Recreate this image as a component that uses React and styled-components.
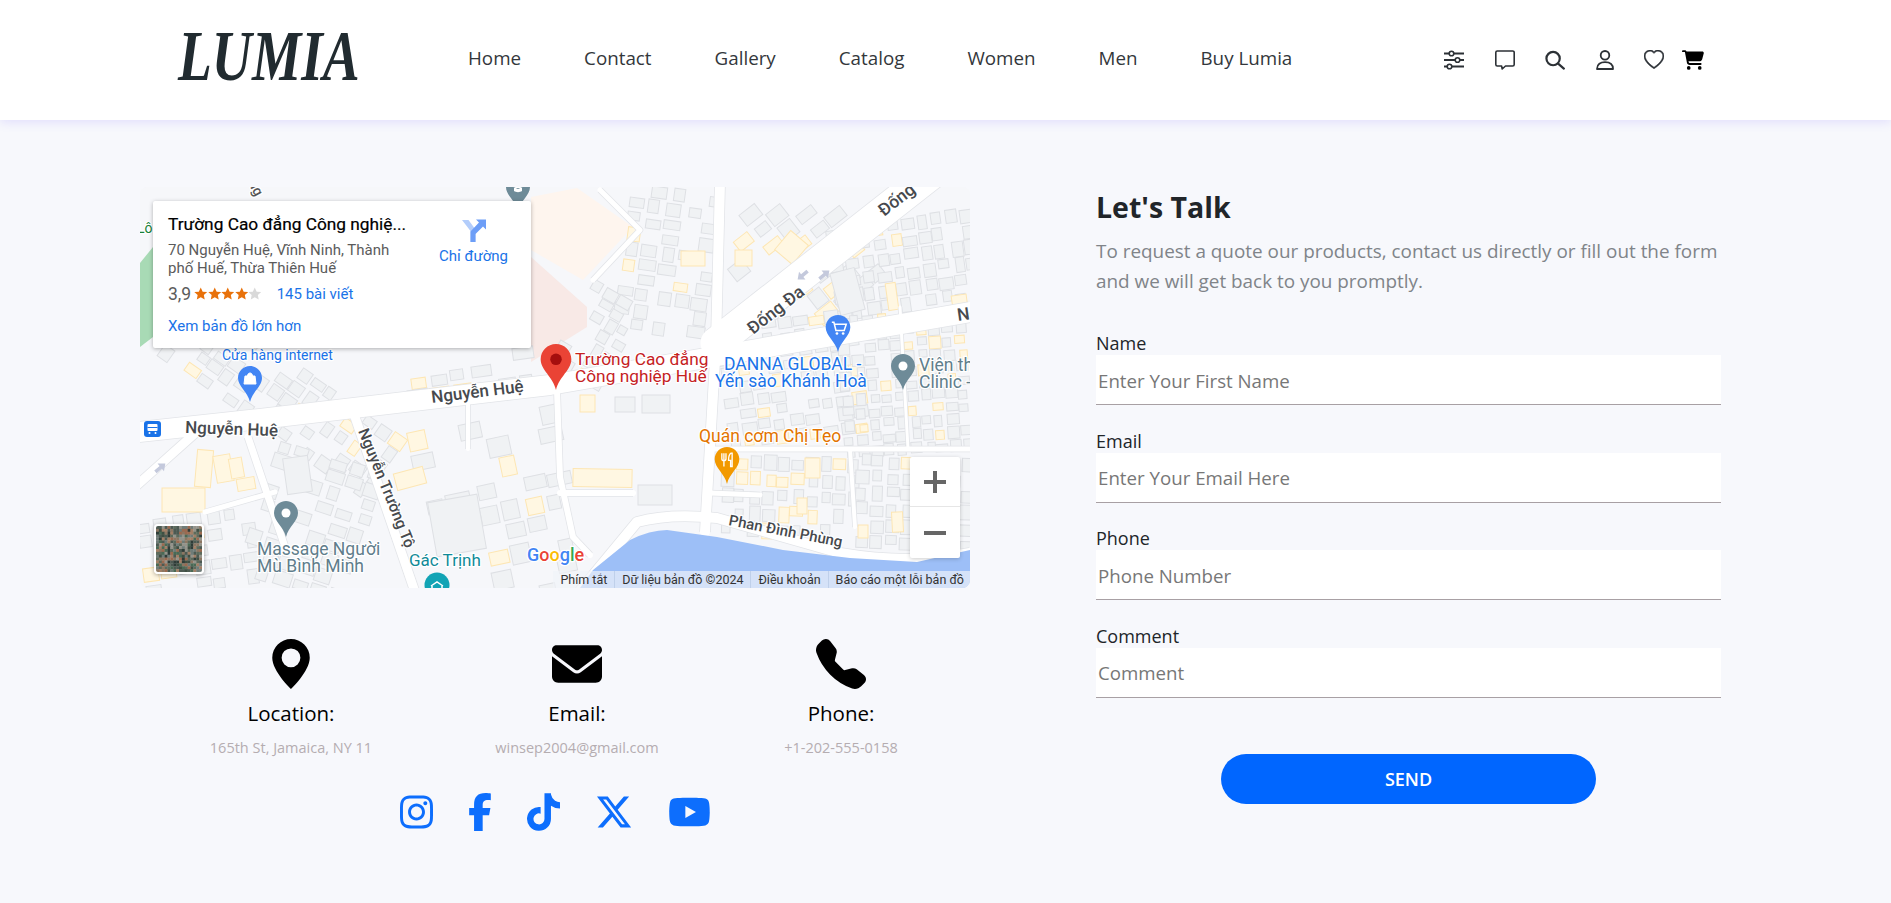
import React from "react";
import styled, { createGlobalStyle } from "styled-components";
import { BsGeoAltFill, BsHeart, BsTelephoneFill } from "react-icons/bs";
import { FaCartShopping, FaEnvelope, FaFacebookF, FaInstagram, FaTiktok, FaXTwitter, FaYoutube } from "react-icons/fa6";

const UI_FONT = `"Open Sans", "Noto Sans", sans-serif`;

const Global = createGlobalStyle`
  html, body { margin: 0; padding: 0; background: #f7f8fc; }
  * { box-sizing: border-box; }
  body { font-family: ${UI_FONT}; }
`;

const Page = styled.div`
  min-height: 903px;
  height: 903px;
  overflow: hidden;
  background: #f7f8fc;
`;

const Header = styled.header`
  height: 120px;
  background: #fff;
  display: flex;
  align-items: center;
  padding: 0 187px 0 178px;
  box-shadow: 0 2px 10px rgba(110, 90, 255, 0.16);
  position: relative;
`;

const Logo = styled.div`
  width: 290px;
  height: 62px;
  margin-top: -8px;
  font: italic 700 72px/62px "Liberation Serif", serif;
  color: #212b30;
  transform: scaleX(0.77);
  transform-origin: left center;
  white-space: nowrap;
`;

const Nav = styled.nav`
  display: flex;
  gap: 63px;
  margin-top: -5px;
`;

const NavLink = styled.a`
  font-size: 18.800px;
  font-weight: 400;
  color: #33373b;
  white-space: nowrap;
`;

const HeaderIcons = styled.div`
  margin-left: auto;
  display: flex;
  align-items: center;
  gap: 30px;
  color: #2c3136;
`;

const HeaderIcon = styled.span`
  display: flex;
  width: 20px;
  height: 20px;
  align-items: center;
  justify-content: center;
  margin-left: ${(p) => p.$nudge || 0}px;
`;

const CartIcon = styled(HeaderIcon)`
  width: 22px;
  margin-left: -12px;
  color: #000;
`;

const Main = styled.main`
  display: flex;
  gap: 126px;
  padding: 67px 170px 0 140px;
`;

const LeftColumn = styled.section`
  width: 830px;
  flex: none;
`;

const MapFrame = styled.div`
  position: relative;
  width: 830px;
  height: 401px;
  border-radius: 8px;
  overflow: hidden;
  background: #f5f6f9;
  font-family: Roboto, sans-serif;
`;

const MapSvg = styled.svg`
  display: block;
`;

const MapLabel = styled.text`
  font-family: Roboto, sans-serif;
  font-size: ${(p) => p.$size || 17.5}px;
  font-weight: ${(p) => p.$weight || 400};
  fill: ${(p) => p.$color || "#5f6368"};
  stroke: #fff;
  stroke-width: 2.5px;
  stroke-linejoin: round;
  paint-order: stroke;
`;

const InfoCard = styled.div`
  position: absolute;
  left: 13px;
  top: 14px;
  width: 378px;
  height: 147px;
  background: #fff;
  border-radius: 2px;
  box-shadow: 0 1px 4px rgba(0, 0, 0, 0.3);
  display: flex;
  justify-content: space-between;
  padding: 13px 23px 0 15px;
`;

const CardInfo = styled.div`
  width: 262px;
`;

const CardTitle = styled.div`
  font-size: 17.300px;
  font-weight: 400;
  line-height: 20px;
  color: #000;
  white-space: nowrap;
  -webkit-text-stroke: 0.2px #000;
`;

const CardAddress = styled.div`
  font-size: 15px;
  line-height: 18px;
  color: #5b5b5b;
  margin-top: 7px;
  width: 240px;
`;

const RatingRow = styled.div`
  display: flex;
  align-items: center;
  margin-top: 7px;
  height: 20px;
`;

const RatingValue = styled.span`
  font-size: 17.500px;
  color: #5b5b5b;
  margin-right: 3px;
`;

const Star = styled.svg`
  display: block;
  width: 13.500px;
  height: 13.500px;
  fill: ${(p) => (p.$on ? "#e8710a" : "#d9d9d9")};
`;

const CardLink = styled.a`
  font-size: 15px;
  color: #1a73e8;
  white-space: nowrap;
`;

const ReviewLink = styled(CardLink)`
  margin-left: 15px;
`;

const LargerMapLink = styled(CardLink)`
  display: block;
  margin-top: 13px;
`;

const Directions = styled.div`
  display: flex;
  flex-direction: column;
  align-items: center;
  gap: 5px;
  padding-top: 4px;
`;

const Thumbnail = styled.div`
  position: absolute;
  left: 14px;
  bottom: 14px;
  width: 50px;
  height: 50px;
  border: 2px solid #fff;
  border-radius: 4px;
  overflow: hidden;
  box-shadow: 0 1px 4px rgba(0, 0, 0, 0.35);
`;

const ZoomControl = styled.div`
  position: absolute;
  left: 770px;
  top: 270px;
  width: 50px;
  height: 101px;
  background: #fff;
  border-radius: 2px;
  box-shadow: 0 1px 4px rgba(0, 0, 0, 0.2);
`;

const ZoomGlyph = styled.div`
  height: ${(p) => (p.$divided ? "50px" : "52px")};
  display: flex;
  align-items: center;
  justify-content: center;
  border-bottom: ${(p) => (p.$divided ? "1px solid #e6e6e6" : "0")};
`;

const Attribution = styled.div`
  position: absolute;
  right: 0;
  bottom: 0;
  height: 17px;
  display: flex;
  align-items: center;
  background: rgba(240, 243, 248, 0.68);
  font-size: 12.500px;
  color: #333;
`;

const AttributionItem = styled.span`
  padding: 0 7px;
  line-height: 17px;
  white-space: nowrap;
  & + & {
    border-left: 1px solid #bfd0ea;
  }
  &:last-child {
    padding-right: 6px;
  }
`;

const ContactGrid = styled.div`
  display: grid;
  grid-template-columns: 302px 270px 258px;
  margin-top: 51px;
`;

const ContactItem = styled.div`
  display: flex;
  flex-direction: column;
  align-items: center;
  color: #000;
`;

const ContactTitle = styled.div`
  font-size: 20.500px;
  font-weight: 500;
  line-height: 26px;
  margin-top: 11px;
`;

const ContactValue = styled.div`
  font-size: 14.500px;
  color: #b5adb1;
  line-height: 18px;
  margin-top: 13px;
`;

const Socials = styled.div`
  display: flex;
  justify-content: center;
  align-items: center;
  gap: 35px;
  margin-top: 36px;
  color: #0d6efd;
`;

const Social = styled.a`
  display: block;
  height: 38px;
  width: ${(p) => p.$width}px;
  color: inherit;
  svg {
    display: block;
    width: 100%;
    height: 100%;
  }
`;

const FormColumn = styled.section`
  width: 625px;
  flex: none;
`;

const Heading = styled.h1`
  margin: 0;
  font-size: 28.500px;
  font-weight: 700;
  line-height: 40px;
  color: #212529;
`;

const Intro = styled.p`
  margin: 9px 0 0;
  font-size: 18.900px;
  line-height: 30px;
  color: #808489;
  width: 630px;
`;

const Form = styled.form`
  display: flex;
  flex-direction: column;
  margin-top: 36px;
`;

const Field = styled.div`
  display: flex;
  flex-direction: column;
  height: 97.670px;
`;

const FieldLabel = styled.label`
  font-size: 18px;
  font-weight: 500;
  line-height: 24px;
  color: #212529;
  height: 24px;
  margin-top: -1px;
`;

const Input = styled.input`
  width: 100%;
  height: 50px;
  flex: none;
  border: 0;
  border-bottom: 1px solid #a8a0a4;
  background: #fff;
  padding: 1px 2px 0;
  font: 400 18.700px ${UI_FONT};
  outline: none;
  &::placeholder {
    color: #777;
    opacity: 1;
  }
`;

const SendButton = styled.button`
  display: block;
  align-self: center;
  width: 375px;
  height: 50px;
  margin-top: 31px;
  border: 0;
  border-radius: 25px;
  background: #0066ff;
  color: #fff;
  font: 600 18px ${UI_FONT};
`;

/* ---------- map drawing ---------- */

function makeRandom(seed) {
  let a = seed;
  return () => {
    a = (a + 0x6d2b79f5) | 0;
    let t = Math.imul(a ^ (a >>> 15), 1 | a);
    t = (t + Math.imul(t ^ (t >>> 7), 61 | t)) ^ t;
    return ((t ^ (t >>> 14)) >>> 0) / 4294967296;
  };
}

const BLOCKS = [
  { x: 480, y: 0, w: 95, h: 150, rot: 8, sx: 19, sy: 15, p: 0.72, yl: 0.25 },
  { x: 430, y: 100, w: 60, h: 85, rot: 30, sx: 15, sy: 14, p: 0.75, yl: 0.15 },
  { x: 590, y: 0, w: 130, h: 140, rot: -38, sx: 22, sy: 18, p: 0.62, yl: 0.3 },
  { x: 690, y: 30, w: 140, h: 90, rot: -8, sx: 15, sy: 16, p: 0.92, yl: 0.08 },
  { x: 0, y: 165, w: 260, h: 75, rot: 35, sx: 16, sy: 15, p: 0.62, yl: 0.12 },
  { x: 265, y: 165, w: 130, h: 45, rot: -8, sx: 22, sy: 15, p: 0.5, yl: 0.3 },
  { x: 0, y: 325, w: 110, h: 77, rot: -8, sx: 17, sy: 16, p: 0.7, yl: 0.2 },
  { x: 115, y: 262, w: 110, h: 140, rot: 18, sx: 19, sy: 16, p: 0.7, yl: 0.08 },
  { x: 270, y: 230, w: 150, h: 75, rot: -12, sx: 26, sy: 22, p: 0.4, yl: 0.1 },
  { x: 345, y: 310, w: 75, h: 90, rot: -12, sx: 22, sy: 22, p: 0.5, yl: 0.1 },
  { x: 580, y: 130, w: 130, h: 125, rot: -8, sx: 16, sy: 14, p: 0.85, yl: 0.16 },
  { x: 700, y: 125, w: 130, h: 140, rot: -4, sx: 13, sy: 13, p: 0.92, yl: 0.1 },
  { x: 580, y: 268, w: 130, h: 75, rot: 2, sx: 14, sy: 17, p: 0.85, yl: 0.2 },
  { x: 715, y: 268, w: 115, h: 85, rot: 2, sx: 15, sy: 16, p: 0.88, yl: 0.1 },
];

const BUILDINGS = (() => {
  const rnd = makeRandom(41);
  return BLOCKS.map((b) => {
    const rects = [];
    for (let y = b.y; y < b.y + b.h; y += b.sy) {
      for (let x = b.x; x < b.x + b.w; x += b.sx) {
        if (rnd() > b.p) continue;
        const w = b.sx * (0.55 + rnd() * 0.4);
        const h = b.sy * (0.55 + rnd() * 0.4);
        rects.push({ x: x + rnd() * (b.sx - w), y: y + rnd() * (b.sy - h), w, h, yellow: rnd() < b.yl });
      }
    }
    return { rot: b.rot, cx: b.x + b.w / 2, cy: b.y + b.h / 2, rects };
  });
})();

/* larger buildings traced by hand: x, y, w, h, yellow, rotation */
const LANDMARKS = [
  [433, 282, 59, 18, 1, 1],
  [498, 298, 34, 20, 0, 0],
  [475, 210, 20, 15, 0, 0],
  [502, 208, 28, 18, 0, 0],
  [440, 208, 15, 17, 1, 0],
  [22, 301, 43, 24, 1, 0],
  [56, 263, 16, 37, 1, 5],
  [75, 268, 17, 27, 1, -10],
  [90, 271, 13, 20, 1, -10],
  [97, 291, 18, 12, 1, -10],
  [145, 270, 25, 36, 0, -8],
  [255, 283, 30, 17, 1, -15],
  [292, 311, 50, 55, 0, -10],
  [541, 64, 24, 15, 1, 0],
  [595, 63, 17, 16, 1, 0],
  [640, 48, 23, 25, 1, 40],
  [747, 96, 10, 27, 1, -8],
  [812, 108, 15, 13, 1, -8],
  [695, 83, 25, 43, 0, -15],
  [665, 271, 15, 20, 1, 0],
  [752, 325, 11, 20, 1, -3],
  [718, 338, 10, 13, 1, 0],
  [657, 311, 10, 16, 1, 0],
];

const AERIAL = (() => {
  const rnd = makeRandom(11);
  const colors = ["#5d6b5c", "#8c7763", "#3f4f43", "#a27f66", "#6f7c78", "#4d5a52", "#94938a", "#2f3d38", "#9a6a50", "#4a6a55"];
  const cells = [];
  for (let y = 0; y < 16; y++) for (let x = 0; x < 16; x++) cells.push({ x, y, c: colors[Math.floor(rnd() * colors.length)] });
  return cells;
})();

const ROADS = [
  { d: "M-10 246 L120 232 L410 198 L830 125", w: 20 },
  { d: "M576 156 L800 -20", w: 31 },
  { d: "M580 -5 L576 156 L565 345", w: 10 },
  { d: "M215 230 L275 405", w: 9 },
  { d: "M435 410 L497 335 Q530 326 577 331 L700 366 Q770 378 830 366", w: 10 },
  { d: "M108 250 L145 360", w: 7 },
  { d: "M-5 300 L62 240", w: 9 },
  { d: "M65 325 L135 305", w: 5 },
  { d: "M460 3 L500 43 L453 93", w: 5 },
  { d: "M570 262 L830 262", w: 5 },
  { d: "M417 203 L420 290 L433 350 L450 368", w: 6 },
  { d: "M420 306 L493 306", w: 6 },
  { d: "M710 262 L715 340", w: 4 },
  { d: "M570 306 L620 308", w: 5 },
  { d: "M328 200 L328 262", w: 4 },
  { d: "M760 120 L768 262", w: 3 },
];

function Pin({ x, top, height, color, children }) {
  const s = height / 36;
  return (
    <g transform={`translate(${x - 12 * s} ${top}) scale(${s})`}>
      <path
        d="M12 0C5.4 0 0 5.3 0 12c0 8.5 9.5 13.5 12 24 2.5-10.500 12-15.500 12-24C24 5.300 18.600 0 12 0z"
        fill={color}
      />
      {children}
    </g>
  );
}

function RoadArrow({ x, y, rot }) {
  return (
    <path
      transform={`translate(${x} ${y}) rotate(${rot})`}
      d="M-6 -1.800H1V-5L7 0 1 5V1.800H-6z"
      fill="#c4c9dc"
    />
  );
}

function MapDrawing() {
  return (
    <MapSvg width="830" height="401" viewBox="0 0 830 401">
      <rect width="830" height="401" fill="#f6f7fa" />
      <path d="M0 76 L13 60 V150 L0 160z" fill="#a8dab5" />
      <path d="M391 10 L437 1 L493 40 L443 93 L391 63z" fill="#fef5ee" />
      <path d="M391 70 L447 120 L447 140 L391 175z" fill="#f8e9e6" />
      <Pin x={378} top={-12} height={36} color="#6e8b98">
        <path d="M12 8l7 3-7 3-7-3zM8 13v3c2 1.500 6 1.500 8 0v-3" fill="#fff" />
      </Pin>
      {BUILDINGS.map((b, i) => (
        <g key={i} transform={`rotate(${b.rot} ${b.cx} ${b.cy})`}>
          {b.rects.map((r, j) => (
            <rect
              key={j}
              x={r.x}
              y={r.y}
              width={r.w}
              height={r.h}
              fill={r.yellow ? "#fff7e2" : "#f0f2f4"}
              stroke={r.yellow ? "#fde6b3" : "#dee0e4"}
              strokeWidth="1"
            />
          ))}
        </g>
      ))}
      {LANDMARKS.map(([x, y, w, h, yellow, rot], i) => (
        <rect
          key={i}
          x={x}
          y={y}
          width={w}
          height={h}
          transform={`rotate(${rot} ${x + w / 2} ${y + h / 2})`}
          fill={yellow ? "#fff7e2" : "#f0f2f4"}
          stroke={yellow ? "#fde6b3" : "#dee0e4"}
        />
      ))}
      {ROADS.map((r, i) => (
        <path key={i} d={r.d} fill="none" stroke="#e2e4e8" strokeWidth={r.w + 1.5} strokeLinejoin="round" />
      ))}
      {ROADS.map((r, i) => (
        <path key={i} d={r.d} fill="none" stroke="#fff" strokeWidth={r.w} strokeLinejoin="round" strokeLinecap="round" />
      ))}
      <path
        d="M453 383 L490 353 Q510 343 527 343 L577 350 L643 363 L710 371 L777 375 L830 363 V401 H440z"
        fill="#9dbff7"
      />
      <RoadArrow x={663} y={88} rot={140} />
      <RoadArrow x={684} y={88} rot={-40} />
      <RoadArrow x={20} y={281} rot={-40} />

      <MapLabel x="-3" y="46" $size="14" $color="#188038">Lô</MapLabel>
      <MapLabel x="108" y="-4" $size="14" $weight="500" $color="#555" transform="rotate(62 108 -4)">ng</MapLabel>
      <MapLabel x="613" y="148" $size="17.500" $weight="500" $color="#46494d" transform="rotate(-38 613 148)">Đống Đa</MapLabel>
      <MapLabel x="744" y="30" $size="17.500" $weight="500" $color="#46494d" transform="rotate(-38 744 30)">Đống</MapLabel>
      <MapLabel x="818" y="134" $size="17.500" $weight="500" $color="#46494d" transform="rotate(-8 818 134)">Ng</MapLabel>
      <MapLabel x="292" y="216" $size="17" $weight="500" $color="#46494d" transform="rotate(-7 292 216)">Nguyễn Huệ</MapLabel>
      <MapLabel x="45" y="246" $size="17" $weight="500" $color="#46494d" transform="rotate(2 45 246)">Nguyễn Huệ</MapLabel>
      <MapLabel x="218" y="244" $size="15.500" $weight="500" $color="#46494d" transform="rotate(68 218 244)">Nguyễn Trường Tộ</MapLabel>
      <MapLabel x="588" y="338" $size="15" $weight="500" $color="#46494d" transform="rotate(11 588 338)">Phan Đình Phùng</MapLabel>

      <Pin x={416} top={157} height={46} color="#ea4335">
        <circle cx="12" cy="12" r="4.500" fill="#a50e0e" />
      </Pin>
      <MapLabel x="435" y="178" $size="17.300" $color="#c5221f">Trường Cao đẳng</MapLabel>
      <MapLabel x="435" y="195" $size="17.300" $color="#c5221f">Công nghiệp Huế</MapLabel>

      <Pin x={698} top={128} height={37} color="#4285f4">
        <path d="M6 7h2l2 8h8l2-6H9" fill="none" stroke="#fff" strokeWidth="1.500" />
        <circle cx="11" cy="18" r="1.300" fill="#fff" />
        <circle cx="17" cy="18" r="1.300" fill="#fff" />
      </Pin>
      <MapLabel x="584" y="183" $color="#1a73e8">DANNA GLOBAL -</MapLabel>
      <MapLabel x="575" y="200" $color="#1a73e8">Yến sào Khánh Hoà</MapLabel>

      <Pin x={763} top={167} height={36} color="#6e8b98">
        <circle cx="12" cy="12" r="4.500" fill="#fff" />
      </Pin>
      <MapLabel x="779" y="184" $color="#607d8b">Viện th</MapLabel>
      <MapLabel x="779" y="201" $color="#607d8b">Clinic -</MapLabel>

      <MapLabel x="559" y="255" $color="#e37400">Quán cơm Chị Tẹo</MapLabel>
      <Pin x={587} top={260} height={37} color="#f29900">
        <path d="M7 6v5.500a2 2 0 0 0 4 0V6M9 6v13M16 6c-2 1-2.500 4-2.500 7H15.500v6H17V6z" fill="none" stroke="#fff" strokeWidth="1.300" />
      </Pin>

      <Pin x={110} top={179} height={36} color="#4285f4">
        <path d="M7 10h10l1 8H6zM9.500 10c0-4 5-4 5 0" fill="#fff" stroke="#fff" strokeWidth="1" />
      </Pin>
      <MapLabel x="82" y="173" $size="14" $color="#1a73e8">Cửa hàng internet</MapLabel>

      <Pin x={146} top={314} height={36} color="#6e8b98">
        <circle cx="12" cy="12" r="4.500" fill="#fff" />
      </Pin>
      <MapLabel x="117" y="368" $color="#607d8b">Massage Người</MapLabel>
      <MapLabel x="117" y="385" $color="#607d8b">Mù Bình Minh</MapLabel>

      <MapLabel x="269" y="379" $size="17" $color="#0f8a98">Gác Trịnh</MapLabel>
      <circle cx="297" cy="398" r="12.500" fill="#12a4b5" />
      <path d="M291 399l6-4 6 4M292 399v6h10v-6" fill="none" stroke="#fff" strokeWidth="1.500" />

      <rect x="4" y="234" width="17" height="16" rx="3" fill="#1a73e8" />
      <rect x="7.500" y="237" width="10" height="7" rx="1" fill="#fff" />
      <path d="M7.500 240.500h10" stroke="#1a73e8" strokeWidth="1" />
      <circle cx="9.500" cy="246" r="1" fill="#fff" />
      <circle cx="15.500" cy="246" r="1" fill="#fff" />

      <MapLabel x="387" y="374" $size="18" $weight="500">
        <tspan fill="#4285f4">G</tspan>
        <tspan fill="#ea4335">o</tspan>
        <tspan fill="#fbbc05">o</tspan>
        <tspan fill="#4285f4">g</tspan>
        <tspan fill="#34a853">l</tspan>
        <tspan fill="#ea4335">e</tspan>
      </MapLabel>
    </MapSvg>
  );
}

function DirectionsIcon() {
  return (
    <svg width="24" height="24" viewBox="0 0 24 24">
      <path d="M0 2h6.500l7 9.500V24H8.500V13z" fill="#b3cdfb" />
      <path d="M8.500 24V13.500L17 4.500 14 1.500H24V11.500L21 8.500 13.500 16V24z" fill="#6d9ef7" />
    </svg>
  );
}

const STAR_PATH = "M7 0.500l2 4.300 4.700.5-3.500 3.100.9 4.600L7 10.700 2.900 13l.9-4.600L.3 5.300 5 4.800z";

function MapPanel() {
  return (
    <MapFrame>
      <MapDrawing />
      <InfoCard>
        <CardInfo>
          <CardTitle>Trường Cao đẳng Công nghiệ...</CardTitle>
          <CardAddress>70 Nguyễn Huệ, Vĩnh Ninh, Thành phố Huế, Thừa Thiên Huế</CardAddress>
          <RatingRow>
            <RatingValue>3,9</RatingValue>
            {[1, 2, 3, 4, 5].map((n) => (
              <Star key={n} viewBox="0 0 14 14" $on={n < 5}>
                <path d={STAR_PATH} />
              </Star>
            ))}
            <ReviewLink>145 bài viết</ReviewLink>
          </RatingRow>
          <LargerMapLink>Xem bản đồ lớn hơn</LargerMapLink>
        </CardInfo>
        <Directions>
          <DirectionsIcon />
          <CardLink>Chỉ đường</CardLink>
        </Directions>
      </InfoCard>
      <Thumbnail>
        <svg width="46" height="46" viewBox="0 0 16 16">
          {AERIAL.map((c, i) => (
            <rect key={i} x={c.x} y={c.y} width="1.100" height="1.100" fill={c.c} />
          ))}
        </svg>
      </Thumbnail>
      <ZoomControl>
        <ZoomGlyph $divided>
          <svg width="22" height="22" viewBox="0 0 22 22">
            <path d="M0 9h9V0h4v9h9v4h-9v9H9v-9H0z" fill="#666" />
          </svg>
        </ZoomGlyph>
        <ZoomGlyph>
          <svg width="22" height="4" viewBox="0 0 22 4">
            <rect width="22" height="4" fill="#666" />
          </svg>
        </ZoomGlyph>
      </ZoomControl>
      <Attribution>
        <AttributionItem>Phím tắt</AttributionItem>
        <AttributionItem>Dữ liệu bản đồ ©2024</AttributionItem>
        <AttributionItem>Điều khoản</AttributionItem>
        <AttributionItem>Báo cáo một lỗi bản đồ</AttributionItem>
      </Attribution>
    </MapFrame>
  );
}

const NAV = ["Home", "Contact", "Gallery", "Catalog", "Women", "Men", "Buy Lumia"];

const FIELDS = [
  { label: "Name", placeholder: "Enter Your First Name", type: "text" },
  { label: "Email", placeholder: "Enter Your Email Here", type: "email" },
  { label: "Phone", placeholder: "Phone Number", type: "tel" },
  { label: "Comment", placeholder: "Comment", type: "text" },
];

const CONTACTS = [
  { Icon: BsGeoAltFill, title: "Location:", value: "165th St, Jamaica, NY 11" },
  { Icon: FaEnvelope, title: "Email:", value: "winsep2004@gmail.com" },
  { Icon: BsTelephoneFill, title: "Phone:", value: "+1-202-555-0158" },
];

const SOCIALS = [
  { Icon: FaInstagram, width: 33 },
  { Icon: FaFacebookF, width: 24 },
  { Icon: FaTiktok, width: 33 },
  { Icon: FaXTwitter, width: 38 },
  { Icon: FaYoutube, width: 43 },
];

export default function App() {
  return (
    <Page>
      <Global />
      <Header>
        <Logo>LUMIA</Logo>
        <Nav>
          {NAV.map((n) => (
            <NavLink key={n}>{n}</NavLink>
          ))}
        </Nav>
        <HeaderIcons>
          <HeaderIcon>
            <svg width="20" height="20" viewBox="0 0 20 20" fill="none" stroke="currentColor" strokeWidth="2">
              <path d="M0 3.500h5M10 3.500h10M0 10h11M16 10h4M0 16.500h3M8 16.500h12" />
              <circle cx="7.500" cy="3.500" r="2.300" strokeWidth="1.600" />
              <circle cx="13.500" cy="10" r="2.300" strokeWidth="1.600" />
              <circle cx="5.500" cy="16.500" r="2.300" strokeWidth="1.600" />
            </svg>
          </HeaderIcon>
          <HeaderIcon $nudge={1}>
            <svg width="20" height="20" viewBox="0 0 20 20" fill="none" stroke="currentColor" strokeWidth="1.600" strokeLinejoin="round">
              <path d="M2.300 1h15.400A1.500 1.500 0 0 1 19.200 2.500v12a1.500 1.500 0 0 1-1.500 1.500h-7.200L7.200 19l-.6-3H2.300a1.500 1.500 0 0 1-1.500-1.500v-12A1.500 1.500 0 0 1 2.300 1z" />
            </svg>
          </HeaderIcon>
          <HeaderIcon>
            <svg width="21" height="20" viewBox="0 0 21 20" fill="none" stroke="currentColor" strokeWidth="2.300" strokeLinecap="round">
              <circle cx="8.500" cy="8.500" r="7" />
              <path d="M13.800 13.800L19.800 19" />
            </svg>
          </HeaderIcon>
          <HeaderIcon>
            <svg width="18" height="20" viewBox="0 0 18 20" fill="none" stroke="currentColor" strokeWidth="1.800" strokeLinejoin="round">
              <circle cx="9" cy="5.300" r="4.300" />
              <path d="M1 19c0-5 3.500-6.800 8-6.800s8 1.800 8 6.800z" />
            </svg>
          </HeaderIcon>
          <HeaderIcon $nudge={-1}>
            <BsHeart size={20} strokeWidth={0.4} />
          </HeaderIcon>
          <CartIcon>
            <FaCartShopping size={22} />
          </CartIcon>
        </HeaderIcons>
      </Header>
      <Main>
        <LeftColumn>
          <MapPanel />
          <ContactGrid>
            {CONTACTS.map(({ Icon, title, value }) => (
              <ContactItem key={title}>
                <Icon size={50} />
                <ContactTitle>{title}</ContactTitle>
                <ContactValue>{value}</ContactValue>
              </ContactItem>
            ))}
          </ContactGrid>
          <Socials>
            {SOCIALS.map(({ Icon, width }, i) => (
              <Social key={i} $width={width}>
                <Icon />
              </Social>
            ))}
          </Socials>
        </LeftColumn>
        <FormColumn>
          <Heading>Let's Talk</Heading>
          <Intro>To request a quote our products, contact us directly or fill out the form and we will get back to you promptly.</Intro>
          <Form>
            {FIELDS.map((f) => (
              <Field key={f.label}>
                <FieldLabel>{f.label}</FieldLabel>
                <Input type={f.type} placeholder={f.placeholder} />
              </Field>
            ))}
            <SendButton type="button">SEND</SendButton>
          </Form>
        </FormColumn>
      </Main>
    </Page>
  );
}
